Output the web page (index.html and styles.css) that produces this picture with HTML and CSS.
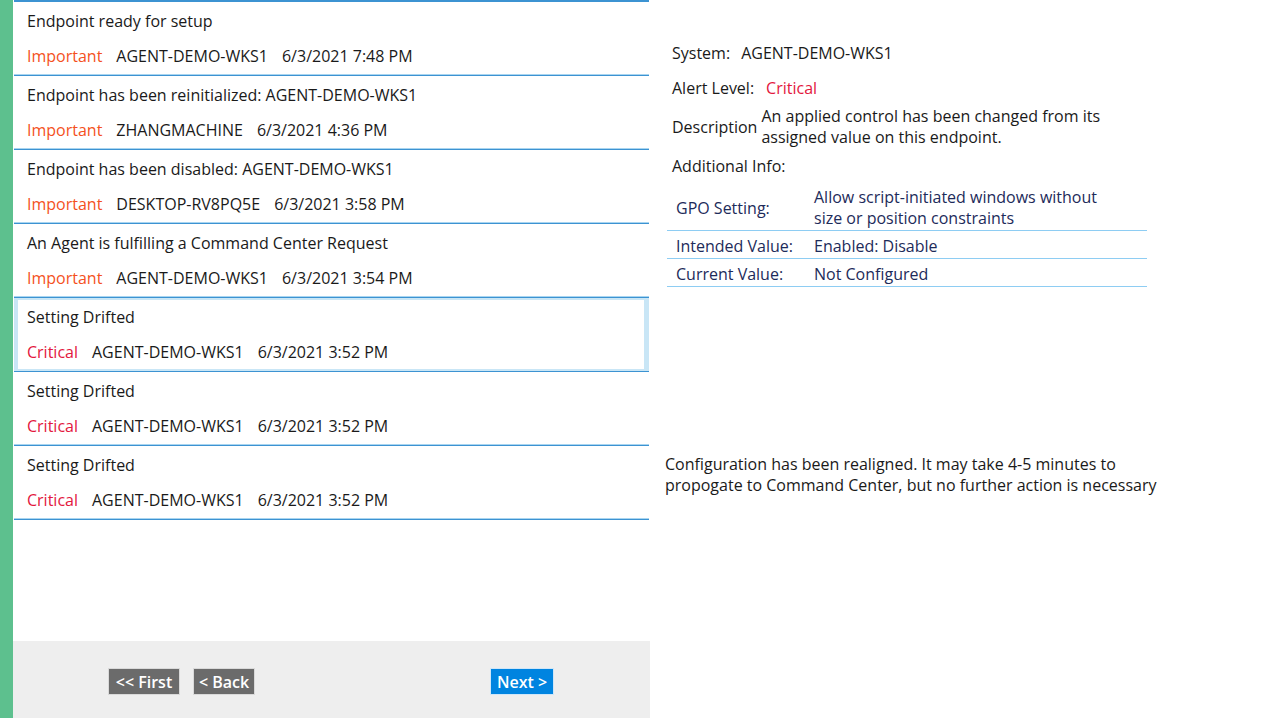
FILE: index.html
```html
<!DOCTYPE html>
<html>
<head>
<meta charset="utf-8">
<link rel="stylesheet" href="styles.css">
</head>
<body>
<div class="app">
  <div class="rail"></div>
  <div class="left">
    <div class="list">
      <div class="item">
        <div class="title">Endpoint ready for setup</div>
        <div class="meta"><span class="lvl important">Important</span><span>AGENT-DEMO-WKS1</span><span>6/3/2021 7:48 PM</span></div>
      </div>
      <div class="item">
        <div class="title">Endpoint has been reinitialized: AGENT-DEMO-WKS1</div>
        <div class="meta"><span class="lvl important">Important</span><span>ZHANGMACHINE</span><span>6/3/2021 4:36 PM</span></div>
      </div>
      <div class="item">
        <div class="title">Endpoint has been disabled: AGENT-DEMO-WKS1</div>
        <div class="meta"><span class="lvl important">Important</span><span>DESKTOP-RV8PQ5E</span><span>6/3/2021 3:58 PM</span></div>
      </div>
      <div class="item">
        <div class="title">An Agent is fulfilling a Command Center Request</div>
        <div class="meta"><span class="lvl important">Important</span><span>AGENT-DEMO-WKS1</span><span>6/3/2021 3:54 PM</span></div>
      </div>
      <div class="item selected">
        <div class="title">Setting Drifted</div>
        <div class="meta"><span class="lvl critical">Critical</span><span>AGENT-DEMO-WKS1</span><span>6/3/2021 3:52 PM</span></div>
      </div>
      <div class="item">
        <div class="title">Setting Drifted</div>
        <div class="meta"><span class="lvl critical">Critical</span><span>AGENT-DEMO-WKS1</span><span>6/3/2021 3:52 PM</span></div>
      </div>
      <div class="item">
        <div class="title">Setting Drifted</div>
        <div class="meta"><span class="lvl critical">Critical</span><span>AGENT-DEMO-WKS1</span><span>6/3/2021 3:52 PM</span></div>
      </div>
    </div>
    <div class="pager">
      <div class="btn gray first">&lt;&lt; First</div>
      <div class="btn gray back">&lt; Back</div>
      <div class="btn blue next">Next &gt;</div>
    </div>
  </div>
  <div class="detail">
    <div class="field"><span class="label l-system">System:</span><span>AGENT-DEMO-WKS1</span></div>
    <div class="field alert"><span class="label l-alert">Alert Level:</span><span class="critical">Critical</span></div>
    <div class="field desc"><span class="label l-desc">Description</span><span class="desc-val">An applied control has been changed from its assigned value on this endpoint.</span></div>
    <div class="field addl"><span class="label">Additional Info:</span></div>
    <div class="info">
      <div class="row tall"><div class="k">GPO Setting:</div><div class="v gpo">Allow script-initiated windows without size or position constraints</div></div>
      <div class="row"><div class="k">Intended Value:</div><div class="v">Enabled: Disable</div></div>
      <div class="row"><div class="k">Current Value:</div><div class="v">Not Configured</div></div>
    </div>
    <div class="msg">Configuration has been realigned. It may take 4-5 minutes to propogate to Command Center, but no further action is necessary</div>
  </div>
</div>
</body>
</html>
```
FILE: styles.css
```css
html, body {
  margin: 0;
  padding: 0;
  background: #ffffff;
}
body {
  font-family: "Open Sans", "Noto Sans", sans-serif;
  font-size: 16px;
  color: #1a1a1a;
}
.app {
  display: flex;
  height: 718px;
  overflow: hidden;
}
.rail {
  width: 13px;
  flex: none;
  background: #5dc08e;
}
.left {
  width: 637px;
  flex: none;
  display: flex;
  flex-direction: column;
}
.list {
  height: 641px;
  margin: 0 1px;
  border-top: 2px solid #3c93d2;
  box-sizing: border-box;
}
.item {
  height: 74px;
  box-sizing: border-box;
  padding: 9px 0 0 13px;
  border-bottom: 1px solid #3c93d2;
  box-shadow: inset 0 -1px 0 #a9d5f0;
}
.item.selected {
  box-shadow: inset 4px 0 0 #c9e6f6, inset -5px 0 0 #c9e6f6, inset 0 2px 0 #c9e6f6, inset 0 -2px 0 #c9e6f6;
}
.title {
  line-height: 20px;
  height: 20px;
  white-space: nowrap;
}
.meta {
  margin-top: 15px;
  line-height: 20px;
  display: flex;
  gap: 14px;
  white-space: nowrap;
}
.important { color: #f4511e; }
.critical { color: #e3173e; }
.pager {
  flex: 1;
  background: #eeeeee;
  display: flex;
  align-items: flex-start;
  padding: 27px 0 0 95px;
}
.btn {
  height: 27px;
  box-sizing: border-box;
  border: 1px solid #d9d9d9;
  color: #ffffff;
  font-weight: 600;
  line-height: 26px;
  text-align: center;
  white-space: nowrap;
}
.gray { background: #6b6b6b; }
.blue { background: #0084e0; border-color: #cfe6f8; }
.first { width: 72px; }
.back { width: 62px; margin-left: 13px; }
.next { width: 64px; margin-left: 235px; }
.detail {
  padding: 43px 0 0 15px;
  flex: none;
  width: 520px;
}
.field {
  display: flex;
  line-height: 20px;
  padding-left: 7px;
}
.label { margin-right: 11px; }
.l-alert { margin-right: 12px; }
.l-desc { margin-right: 4px; align-self: center; }
.alert { margin-top: 15px; }
.desc { margin-top: 8px; }
.desc-val { width: 350px; line-height: 21px; }
.addl { margin-top: 8px; }
.info {
  margin: 10px 0 0 2px;
  width: 480px;
  color: #1d2b5a;
}
.row {
  display: flex;
  align-items: center;
  height: 28px;
  padding-top: 3px;
  box-sizing: border-box;
  border-bottom: 1px solid #8ecdf3;
}
.row.tall { height: 45px; padding-top: 0; }
.k {
  width: 138px;
  padding-left: 9px;
  flex: none;
}
.v {
  width: 300px;
  line-height: 21px;
}
.msg {
  margin-top: 167px;
  width: 500px;
  line-height: 21px;
}
```
